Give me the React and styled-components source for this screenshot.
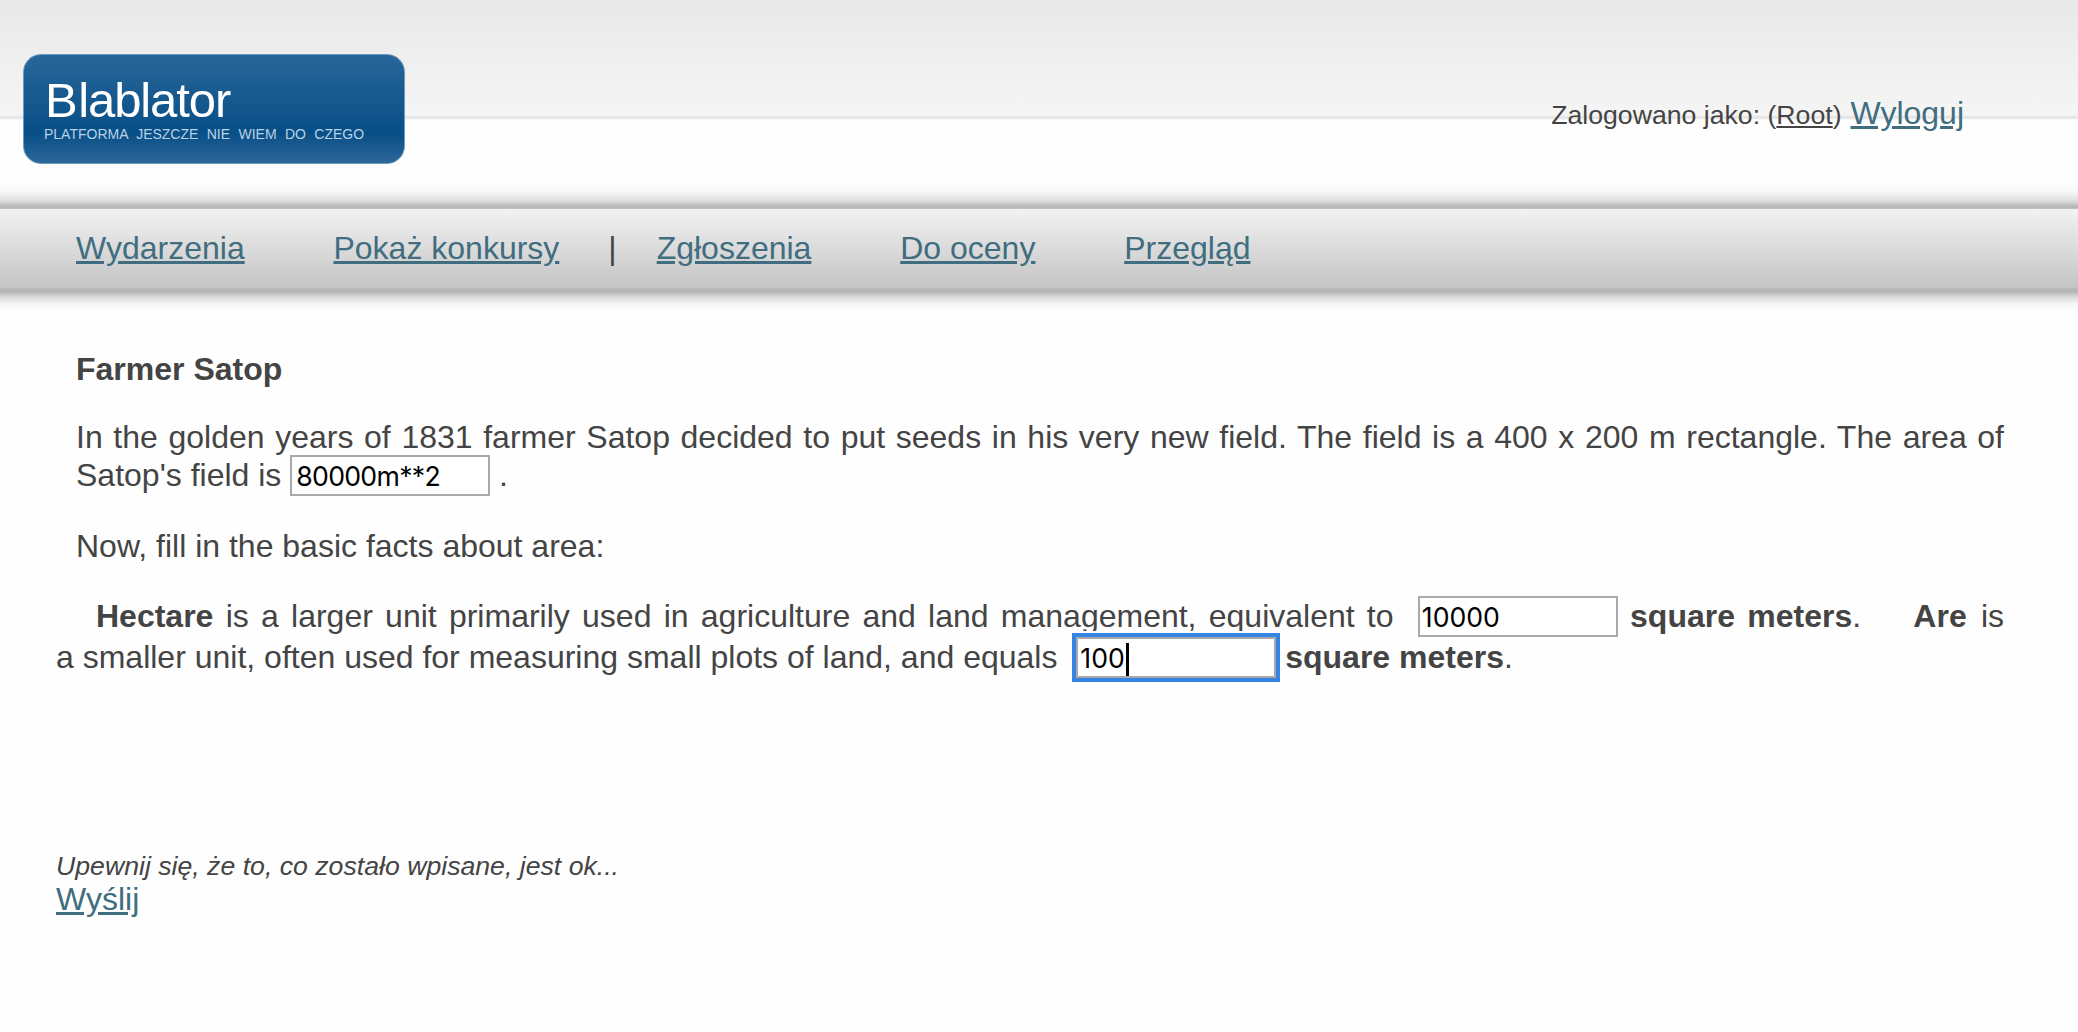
import React from 'react';
import styled, { createGlobalStyle } from 'styled-components';

const App = () => {
  return (
    <>
      <GlobalStyle />
      <Header>
        <Logo>
          <LogoName>Blablator</LogoName>
          <LogoMotto>PLATFORMA JESZCZE NIE WIEM DO CZEGO</LogoMotto>
        </Logo>
        <Session>
          Zalogowano jako: (<u>Root</u>) <Link href="#">Wyloguj</Link>
        </Session>
      </Header>
      <Nav>
        <Link href="#">Wydarzenia</Link>
        <Link href="#">Pokaż konkursy</Link>
        <Separator>|</Separator>
        <Link href="#">Zgłoszenia</Link>
        <Link href="#">Do oceny</Link>
        <Link href="#">Przegląd</Link>
      </Nav>
      <NavShadow />
      <Content>
        <Title>Farmer Satop</Title>
        <Paragraph $gap={33}>
          In the golden years of 1831 farmer Satop decided to put seeds in his very new field. The field
          is a 400 x 200 m rectangle. The area of Satop's field is{' '}
          <Field $pad={4} $tracking={-0.7} defaultValue="80000m**2" /> .
        </Paragraph>
        <Paragraph $gap={31}>Now, fill in the basic facts about area:</Paragraph>
        <Facts>
          <Term $before={40}>Hectare</Term> is a larger unit primarily used in agriculture and land
          management, equivalent to <Field $left={12} $pad={2} defaultValue="10000" /> <b>square meters</b>.{' '}
          <Term $before={40} $after={2}>Are</Term> is a&nbsp;smaller unit, often used for measuring small plots of
          land, and equals <FocusedField>100<Caret /></FocusedField> <b>square meters</b>.
        </Facts>
        <Hint>Upewnij się, że to, co zostało wpisane, jest ok...</Hint>
        <Link href="#">Wyślij</Link>
      </Content>
    </>
  );
}

const GlobalStyle = createGlobalStyle`
  * {
    box-sizing: border-box;
  }
  body {
    margin: 0;
    background: #fefefe;
    color: #444;
    font: 32px/36px "Liberation Sans", Arial, sans-serif;
    overflow: hidden;
  }
`;

const Link = styled.a`
  color: #406d7f;
  text-decoration: underline;
`;

const Header = styled.header`
  display: flex;
  justify-content: space-between;
  align-items: flex-start;
  height: 209px;
  padding: 54px 114px 0 23px;
  background:
    linear-gradient(#fefefe00, #f4f4f4 40%, #dcdcdc 70%, #b4b4b4 92%, #c4c4c4) 0 183px / 100% 26px no-repeat,
    linear-gradient(#e8e8e8, #f5f5f5 115px, #e4e4e4 117px, #e4e4e4 118px, #fefefe 120px);
`;

const Logo = styled.div`
  width: 382px;
  height: 110px;
  padding: 21px 20px;
  border: 1px solid #6d9abf;
  border-radius: 18px;
  background: linear-gradient(#286699, #084f87 72%, #2d6799);
  color: #fff;
`;

const LogoName = styled.div`
  padding-left: 1px;
  font-size: 49px;
  line-height: 48px;
  letter-spacing: -1.1px;
  white-space: nowrap;

  &::first-letter {
    letter-spacing: 0.5px;
  }
`;

const LogoMotto = styled.div`
  margin-top: 2px;
  color: #b9d2e6;
  font-size: 14px;
  line-height: 16px;
  word-spacing: 4.5px;
  white-space: nowrap;
`;

const Session = styled.div`
  padding-top: 41px;
  font-size: 26.67px;

  a {
    margin-left: 1.5px;
    font-size: 32px;
  }
`;

const Nav = styled.nav`
  display: flex;
  height: 79px;
  padding: 21px 76px;
  background: linear-gradient(#f2f2f2, #c4c4c4);

  a {
    margin-right: 88.8px;
  }
  a:nth-child(2) {
    margin-right: 49px;
  }
`;

const Separator = styled.span`
  margin-right: 40px;
`;

const NavShadow = styled.div`
  height: 24px;
  background: linear-gradient(#bcbcbc, #b4b4b4 2px, #b8b8b8 4px, #dcdcdc 40%, #f4f4f4 65%, #fefefe);
`;

const Content = styled.main`
  padding: 39px 74px 0 56px;
`;

const Title = styled.h1`
  margin: 0 0 31px 20px;
  font-size: 32px;
  line-height: 36px;
`;

const Paragraph = styled.p`
  margin: 0 0 ${({ $gap }) => $gap}px 20px;
  line-height: 38px;
  text-align: justify;
`;

const Facts = styled.p`
  margin: 0 0 173px;
  line-height: 41px;
  text-align: justify;
`;

const Term = styled.b`
  margin-left: ${({ $before }) => $before}px;
  margin-right: ${({ $after }) => $after || 0}px;
`;

/* negative vertical margins keep the boxes from stretching the text lines */
const Field = styled.input`
  width: 200px;
  height: 41px;
  margin: -6px 0 -6px ${({ $left }) => $left || 0}px;
  padding: 3px ${({ $pad }) => $pad}px 1px;
  border: 2px solid #a9a9a9;
  background: #fff;
  color: #000;
  font: 26.67px Inter, sans-serif;
  letter-spacing: ${({ $tracking }) => $tracking || 0}px;
  vertical-align: baseline;
`;

const FocusedField = styled.span`
  display: inline-block;
  width: 200px;
  height: 41px;
  margin: -6px 0 -6px 10px;
  padding: 1px 2px 0;
  border: 2px solid #a9a9a9;
  background: #fff;
  outline: 4px solid #3584e4;
  box-shadow: 0 0 0 6px #fefefe;
  color: #000;
  font: 26.67px/36px Inter, sans-serif;
  text-align: left;
`;

const Caret = styled.i`
  display: inline-block;
  width: 3px;
  height: 33px;
  margin: -2px 0 -2px 1px;
  background: #000;
  vertical-align: -6px;
`;

const Hint = styled.div`
  font-size: 26.67px;
  font-style: italic;
  line-height: 30px;
`;

export default App;
